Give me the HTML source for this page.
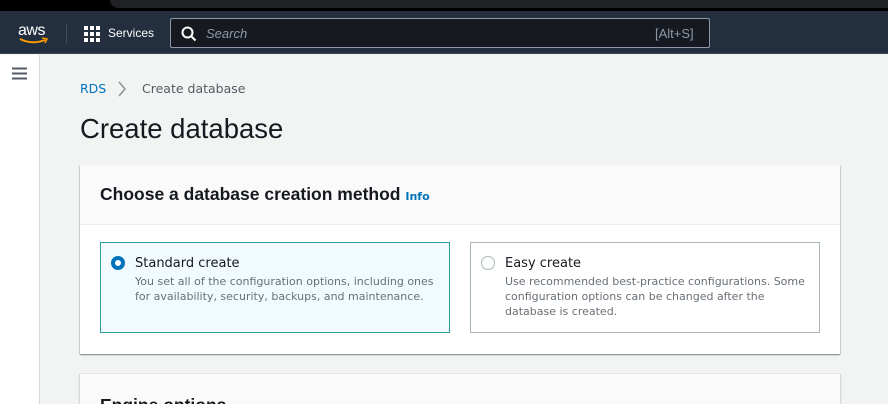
<!DOCTYPE html>
<html><head><style>
*{margin:0;padding:0;box-sizing:border-box}
html,body{width:888px;height:404px;overflow:hidden}
body{font-family:"Liberation Sans",sans-serif;background:#f2f3f3;position:relative}
.abs{position:absolute}
.d{font-family:"DejaVu Sans",sans-serif}
</style></head><body>
<div class="abs" style="left:0;top:0;width:888px;height:11px;background:#000"></div>
<div class="abs" style="left:110px;top:0;width:778px;height:8px;background:#202124;border-bottom-left-radius:8px"></div>
<div class="abs" style="left:0;top:11px;width:888px;height:43px;background:#232f3e;border-bottom:1px solid #3b4450"></div>
<div class="abs" style="left:18px;top:22px;color:#fff;font-size:16px;letter-spacing:-0.5px">aws</div>
<svg class="abs" style="left:18px;top:37px" width="32" height="8"><path d="M2 2 Q14 8 27 3" stroke="#ff9900" stroke-width="2" fill="none"/><path d="M24 1 L29 2 L27 6" stroke="#ff9900" stroke-width="1.5" fill="none"/></svg>
<div class="abs" style="left:66px;top:23px;width:1px;height:21px;background:#414d5c"></div>
<svg class="abs" style="left:84px;top:26px" width="17" height="17" fill="#fff"><rect x="0" y="0" width="4" height="4"/><rect x="6" y="0" width="4" height="4"/><rect x="12" y="0" width="4" height="4"/><rect x="0" y="6" width="4" height="4"/><rect x="6" y="6" width="4" height="4"/><rect x="12" y="6" width="4" height="4"/><rect x="0" y="12" width="4" height="4"/><rect x="6" y="12" width="4" height="4"/><rect x="12" y="12" width="4" height="4"/></svg>
<div class="abs" style="left:108px;top:26px;color:#fff;font-size:12px">Services</div>
<div class="abs" style="left:170px;top:18px;width:540px;height:30px;background:#16191f;border:1px solid #8d99a8;border-radius:2px"></div>
<svg class="abs" style="left:181px;top:26px" width="16" height="16"><circle cx="6.5" cy="6.5" r="5" stroke="#fff" stroke-width="2" fill="none"/><path d="M10 10 L14.5 14.5" stroke="#fff" stroke-width="2"/></svg>
<div class="abs" style="left:206px;top:26px;color:#8d99a8;font-size:13px;font-style:italic">Search</div>
<div class="abs" style="left:655px;top:26px;color:#8d99a8;font-size:13px">[Alt+S]</div>
<div class="abs" style="left:0;top:55px;width:40px;height:349px;background:#fff;border-right:1px solid #d5dbdb"></div>
<svg class="abs" style="left:12px;top:67px" width="16" height="14"><path d="M0 1.5H15M0 6.5H15M0 11.5H15" stroke="#545b64" stroke-width="2"/></svg>
<div class="abs d" style="left:80px;top:81px;font-size:12.5px;color:#0073bb">RDS</div>
<svg class="abs" style="left:117px;top:81px" width="10" height="16"><path d="M2 1 L8 8 L2 15" stroke="#879596" stroke-width="1.5" fill="none"/></svg>
<div class="abs d" style="left:142px;top:81px;font-size:12.5px;color:#545b64">Create database</div>
<div class="abs" style="left:80px;top:113px;font-size:27.5px;color:#16191f">Create database</div>
<div class="abs" style="left:80px;top:165px;width:760px;height:189px;background:#fff;box-shadow:0 1px 1px rgba(0,28,36,.3),1px 1px 1px rgba(0,28,36,.15),-1px 1px 1px rgba(0,28,36,.15)">
 <div style="height:60px;background:#fafafa;border-bottom:1px solid #eaeded;padding:19px 20px;font-size:17.5px;font-weight:bold;color:#16191f">Choose a database creation method <span class="d" style="font-size:11px;color:#0073bb">Info</span></div>
</div>
<div class="abs" style="left:100px;top:242px;width:350px;height:91px;background:#f1faff;border:1px solid #2a9d9a"></div>
<div class="abs" style="left:111px;top:256px;width:14px;height:14px;border-radius:50%;border:4px solid #0073bb;background:#fff"></div>
<div class="abs d" style="left:135px;top:256px;font-size:13px;color:#16191f">Standard create</div>
<div class="abs d" style="left:135px;top:274px;font-size:11px;line-height:15px;color:#687078;white-space:nowrap">You set all of the configuration options, including ones<br>for availability, security, backups, and maintenance.</div>
<div class="abs" style="left:470px;top:242px;width:350px;height:91px;background:#fff;border:1px solid #aab7b8"></div>
<div class="abs" style="left:481px;top:256px;width:14px;height:14px;border-radius:50%;border:1px solid #aab7b8;background:#fff"></div>
<div class="abs d" style="left:505px;top:256px;font-size:13px;color:#16191f">Easy create</div>
<div class="abs d" style="left:505px;top:274px;font-size:11px;line-height:15px;color:#687078;white-space:nowrap">Use recommended best-practice configurations. Some<br>configuration options can be changed after the<br>database is created.</div>
<div class="abs" style="left:80px;top:374px;width:760px;height:30px;overflow:hidden;background:#fafafa;box-shadow:1px 0 1px rgba(0,28,36,.15),-1px 0 1px rgba(0,28,36,.15)">
 <div style="padding:21px 20px;font-size:17.5px;font-weight:bold;color:#16191f">Engine options</div>
</div>
</body></html>
